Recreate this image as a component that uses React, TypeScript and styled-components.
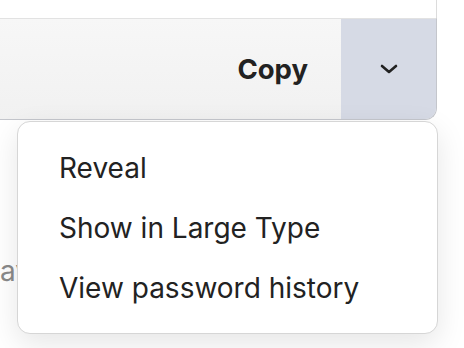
import React from "react";
import styled, { createGlobalStyle } from "styled-components";

const Global = createGlobalStyle`
  html, body { margin: 0; padding: 0; background: #ffffff; }
  body { font-family: Inter, "Noto Sans", sans-serif; width: 464px; height: 348px; overflow: hidden; }
`;

const Page = styled.div`
  position: relative;
  width: 464px;
  height: 348px;
  overflow: hidden;
  background: #ffffff;
`;

const Card = styled.div`
  width: 437px;
  display: flex;
  flex-direction: column;
`;

const TopArea = styled.div`
  height: 18px;
  border-right: 1px solid #dcdcdc;
  background: #ffffff;
`;

const Bar = styled.div`
  display: flex;
  height: 100px;
  border-top: 1px solid #e2e2e2;
  border-bottom: 1px solid #c4c6cc;
  border-right: 1px solid #c4c6cc;
  border-bottom-right-radius: 12px;
  overflow: hidden;
  background: linear-gradient(#f7f7f7, #f1f1f1);
`;

const CopyButton = styled.div`
  flex: 1;
  display: flex;
  align-items: center;
  justify-content: flex-end;
  padding-right: 33px;
  font-size: 27.5px;
  font-weight: 700;
  color: #222222;
`;

const ChevronButton = styled.div`
  width: 95px;
  display: flex;
  align-items: center;
  justify-content: center;
  background: #d6dae5;
  color: #222222;
`;

const Behind = styled.div`
  padding: 134px 0 0 0;
  font-size: 28px;
  color: #8a8a8a;
`;

const Menu = styled.div`
  position: absolute;
  left: 17px;
  top: 121px;
  width: 421px;
  height: 213px;
  background: #ffffff;
  border: 1px solid #d6d6d6;
  border-radius: 13px;
  box-shadow: 0 10px 30px rgba(0, 0, 0, 0.1);
  display: flex;
  flex-direction: column;
  padding: 16px 0 0 41px;
  box-sizing: border-box;
`;

const Item = styled.div`
  height: 60px;
  display: flex;
  align-items: center;
  font-size: 28px;
  color: #222222;
`;

export default function App() {
  return (
    <Page>
      <Global />
      <Card>
        <TopArea />
        <Bar>
          <CopyButton>Copy</CopyButton>
          <ChevronButton>
            <svg width="18" height="12" viewBox="0 0 18 12" fill="none">
              <path d="M2 3 L9 9 L16 3" stroke="#222" strokeWidth="2.6" strokeLinecap="round" strokeLinejoin="round" />
            </svg>
          </ChevronButton>
        </Bar>
        <Behind>av</Behind>
      </Card>
      <Menu>
        <Item>Reveal</Item>
        <Item>Show in Large Type</Item>
        <Item>View password history</Item>
      </Menu>
    </Page>
  );
}
